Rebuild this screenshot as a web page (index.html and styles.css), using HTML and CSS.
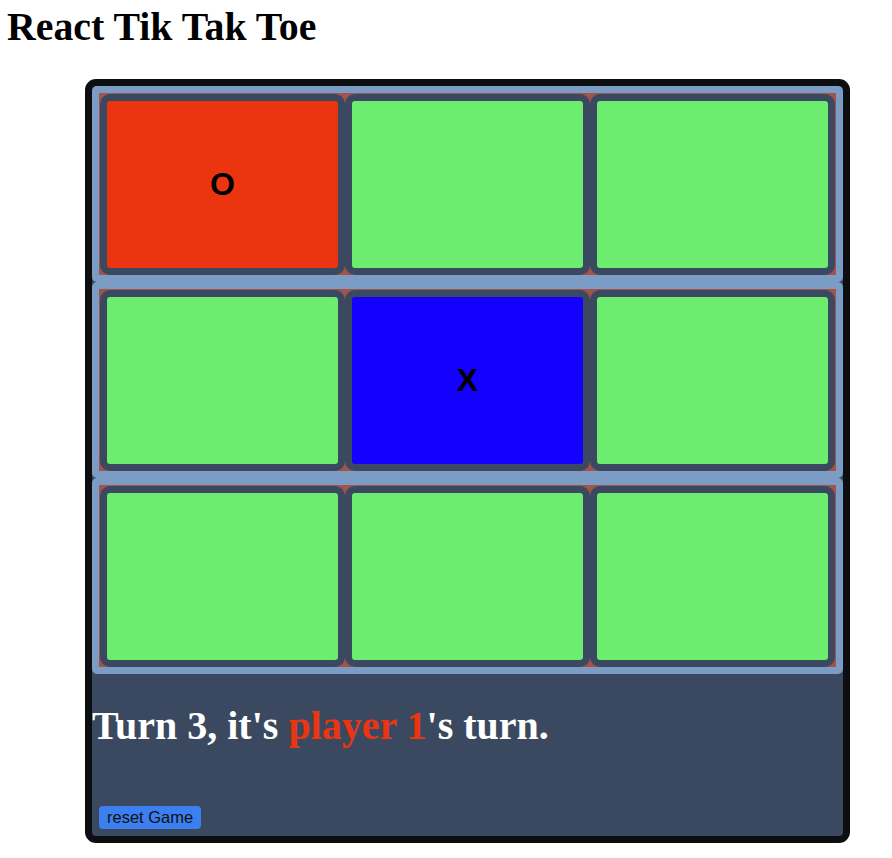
FILE: index.html
```html
<!DOCTYPE html>
<html lang="en">
<head>
<meta charset="utf-8">
<title>React Tik Tak Toe</title>
<link rel="stylesheet" href="styles.css">
</head>
<body>
<h1 class="title">React Tik Tak Toe</h1>
<div class="game">
  <div class="board">
    <div class="row">
      <div class="cell cell-o">O</div>
      <div class="cell"></div>
      <div class="cell"></div>
    </div>
    <div class="row">
      <div class="cell"></div>
      <div class="cell cell-x">X</div>
      <div class="cell"></div>
    </div>
    <div class="row">
      <div class="cell"></div>
      <div class="cell"></div>
      <div class="cell"></div>
    </div>
  </div>
  <div class="status">
    <p class="turn">Turn 3, it's <span class="player">player 1</span>'s turn.</p>
    <button class="reset" type="button">reset Game</button>
  </div>
</div>
</body>
</html>
```

FILE: styles.css
```css
html, body {
  background: #ffffff;
}
body {
  margin: 0;
  padding: 5px 7px 0 7px;
  font-family: "Liberation Serif", "Times New Roman", serif;
}
.title {
  margin: 0;
  font-size: 39.8px;
  line-height: 44px;
  font-weight: bold;
  color: #000;
}
.game {
  width: 751px;
  margin: 30px 0 0 78px;
  border: 7px solid #0d0e10;
  border-radius: 11px;
  background: #3a4960;
  overflow: hidden;
}
.board {
  display: flex;
  flex-direction: column;
}
.row {
  display: flex;
  padding: 1px 1px 0 1px;
  border: 7px solid #7b9cc4;
  border-radius: 5px;
  background: #a2534a;
}
.cell {
  flex: 1;
  height: 167px;
  border: 7px solid #3a4960;
  border-radius: 10px;
  background: #6ced6f;
  display: flex;
  align-items: center;
  justify-content: center;
  font-family: "Liberation Sans", Arial, sans-serif;
  font-weight: bold;
  font-size: 32px;
  color: #000;
}
.cell-o {
  background: #eb3510;
}
.cell-x {
  background: #1400ff;
}
.status {
  display: flex;
  flex-direction: column;
  align-items: flex-start;
}
.turn {
  margin: 29px 0 57px 0;
  font-size: 40px;
  line-height: 46px;
  font-weight: bold;
  color: #ffffff;
}
.player {
  color: #eb3510;
}
.reset {
  margin: 0 0 7px 7px;
  padding: 2px 8px;
  border: none;
  border-radius: 4px;
  background: #3b7ff0;
  color: #111;
  font-family: "Liberation Sans", Arial, sans-serif;
  font-size: 16.5px;
  line-height: 19px;
}
```
